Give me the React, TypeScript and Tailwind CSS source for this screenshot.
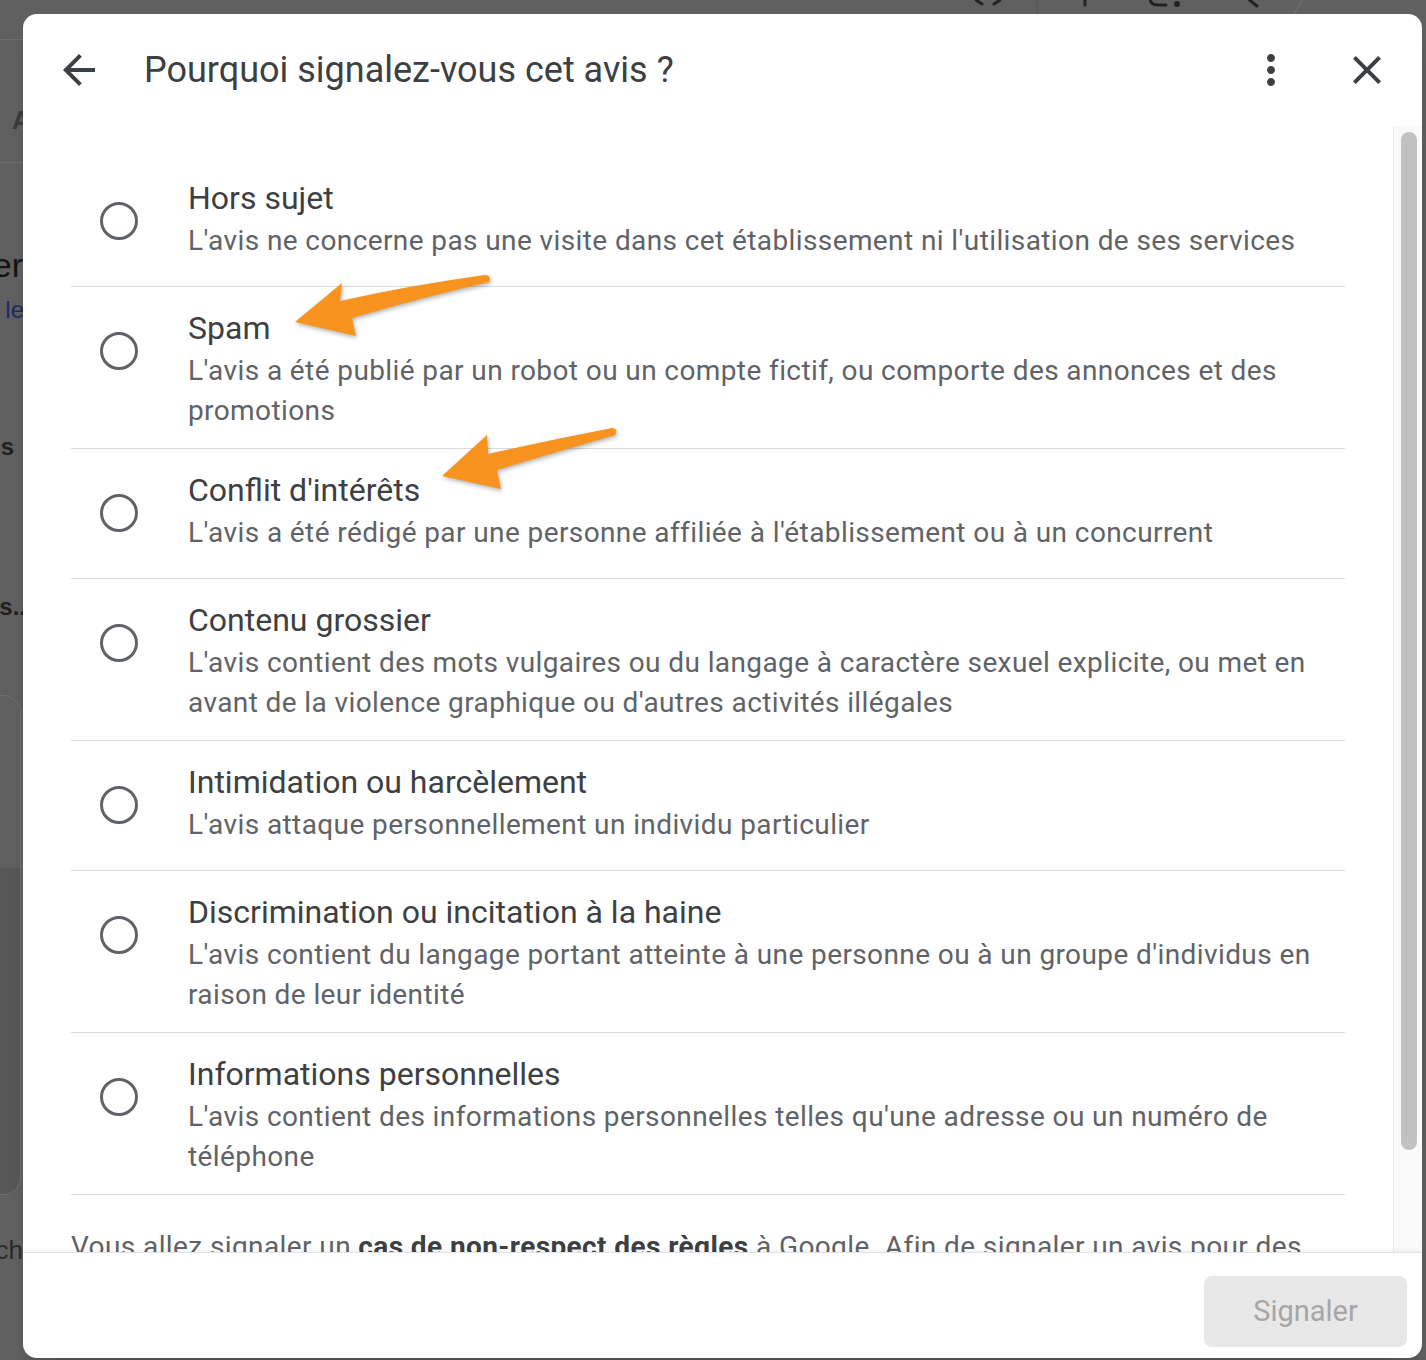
import { useState } from "react";

const reasons = [
  {
    title: "Hors sujet",
    desc: "L'avis ne concerne pas une visite dans cet établissement ni l'utilisation de ses services",
  },
  {
    title: "Spam",
    desc: "L'avis a été publié par un robot ou un compte fictif, ou comporte des annonces et des promotions",
  },
  {
    title: "Conflit d'intérêts",
    desc: "L'avis a été rédigé par une personne affiliée à l'établissement ou à un concurrent",
  },
  {
    title: "Contenu grossier",
    desc: "L'avis contient des mots vulgaires ou du langage à caractère sexuel explicite, ou met en avant de la violence graphique ou d'autres activités illégales",
  },
  {
    title: "Intimidation ou harcèlement",
    desc: "L'avis attaque personnellement un individu particulier",
  },
  {
    title: "Discrimination ou incitation à la haine",
    desc: "L'avis contient du langage portant atteinte à une personne ou à un groupe d'individus en raison de leur identité",
  },
  {
    title: "Informations personnelles",
    desc: "L'avis contient des informations personnelles telles qu'une adresse ou un numéro de téléphone",
  },
];

function Icon({ d }: { d: string }) {
  return (
    <svg viewBox="0 0 24 24" className="h-12 w-12 fill-[#3c4043]">
      <path d={d} />
    </svg>
  );
}

function Reason({
  title,
  desc,
  checked,
  onPick,
}: {
  title: string;
  desc: string;
  checked: boolean;
  onPick: () => void;
}) {
  return (
    <label
      onClick={onPick}
      className="flex min-h-[130px] cursor-pointer items-start border-b border-[#dadce0]"
    >
      <div className="w-[117px] shrink-0 pl-[29px] pt-[45px]">
        <div className="flex h-[38px] w-[38px] items-center justify-center rounded-full border-[3px] border-[#5f6368]">
          {checked && <div className="h-[18px] w-[18px] rounded-full bg-[#1a73e8]" />}
        </div>
      </div>
      <div className="flex-1 pb-[17px] pt-[21px]">
        <div className="text-[32px] leading-[40px] text-[#3c4043]">{title}</div>
        <div className="mt-[3px] text-[28px] leading-[40px] tracking-[0.4px] text-[#5f6368]">
          {desc}
        </div>
      </div>
    </label>
  );
}

// page behind the modal, mostly hidden
function Backdrop() {
  return (
    <div className="flex flex-col font-['Liberation_Sans',sans-serif]">
      <svg width="1426" height="14" viewBox="0 0 1426 14" className="block">
        <g stroke="#222" strokeWidth="3" fill="none" strokeLinecap="round">
          <path d="M976 0 L982 4 M1000 0 L994 4" />
          <path d="M1085 0 V5" />
          <path d="M1150 -2 Q1150 5 1158 5 H1166" />
          <path d="M1247 -2 L1257 6" />
        </g>
        <circle cx="1177" cy="4" r="3" fill="#222" />
        <path d="M1037 0 V14" stroke="#585858" strokeWidth="2" />
        <path d="M1302 0 Q1298 8 1294 14" stroke="#6e6e6e" strokeWidth="1.5" fill="none" />
      </svg>
      <div className="flex w-[60px] flex-col">
        <div className="h-[25px]" />
        <div className="h-px bg-[#6e6e6e]" />
        <div className="mt-[60px] h-[40px] pl-[12px] text-[26px] font-bold leading-[40px] text-[#3a3a3a]">
          A
        </div>
        <div className="mt-[22px] h-px bg-[#6e6e6e]" />
        <div className="mt-[82px] flex h-[40px] justify-end overflow-hidden whitespace-nowrap pr-[37px] text-[34px] leading-[40px] text-[#141414]">
          Trier
        </div>
        <div className="mt-[5px] flex h-[40px] justify-end overflow-hidden whitespace-nowrap pr-[36px] text-[24px] leading-[40px] text-[#1d2a6b]">
          Voir le
        </div>
        <div className="mt-[97px] flex h-[40px] justify-end overflow-hidden whitespace-nowrap pr-[46px] text-[24px] font-bold leading-[40px] text-[#202020]">
          Avis
        </div>
        <div className="mt-[120px] flex h-[40px] justify-end overflow-hidden whitespace-nowrap pr-[34px] text-[24px] font-bold leading-[40px] text-[#202020]">
          Photos..
        </div>
        <div className="ml-[-40px] mt-[68px] flex h-[500px] w-[61px] flex-col overflow-hidden rounded-[18px] border border-[#707070]">
          <div className="h-[172px]" />
          <div className="flex-1 bg-[#575757]" />
        </div>
        <div className="mt-[35px] flex h-[40px] justify-end overflow-hidden whitespace-nowrap pr-[37px] text-[26px] leading-[40px] text-[#2a2a2a]">
          Rich
        </div>
      </div>
    </div>
  );
}

export default function App() {
  const [picked, setPicked] = useState<number | null>(null);

  return (
    <div className="relative h-[1360px] w-full overflow-hidden bg-[#606060] font-['Roboto',sans-serif]">
      <Backdrop />

      <div className="absolute left-[23px] top-[14px] flex h-[1344px] w-[1399px] flex-col overflow-hidden rounded-[14px] bg-white shadow-xl">
        <header className="flex h-[112px] shrink-0 items-center pl-[32px] pr-[31px]">
          <Icon d="M20 11H7.83l5.59-5.59L12 4l-8 8 8 8 1.41-1.41L7.83 13H20v-2z" />
          <h1 className="ml-[41px] flex-1 text-[36px] text-[#3c4043]">
            Pourquoi signalez-vous cet avis ?
          </h1>
          <Icon d="M12 8c1.1 0 2-.9 2-2s-.9-2-2-2-2 .9-2 2 .9 2 2 2zm0 2c-1.1 0-2 .9-2 2s.9 2 2 2 2-.9 2-2-.9-2-2-2zm0 6c-1.1 0-2 .9-2 2s.9 2 2 2 2-.9 2-2-.9-2-2-2z" />
          <div className="ml-[48px]">
            <Icon d="M19 6.41L17.59 5 12 10.59 6.41 5 5 6.41 10.59 12 5 17.59 6.41 19 12 13.41 17.59 19 19 17.59 13.41 12z" />
          </div>
        </header>

        <div className="flex min-h-0 flex-1">
          <div className="flex-1 overflow-hidden px-[48px] pt-[31px]">
            {reasons.map((r, i) => (
              <Reason
                key={r.title}
                title={r.title}
                desc={r.desc}
                checked={picked === i}
                onPick={() => setPicked(i)}
              />
            ))}
            <p className="mt-[32px] text-[28px] leading-[40px] tracking-[0.4px] text-[#5f6368]">
              Vous allez signaler un{" "}
              <b className="font-bold text-[#3c4043]">cas de non-respect des règles</b> à Google.
              Afin de signaler un avis pour des raisons juridiques, utilisez plutôt ce formulaire.
            </p>
          </div>
          <div className="w-[29px] shrink-0 border-l border-[#ececec] bg-[#fafafa] pl-[7px] pt-[6px]">
            <div className="h-[1018px] w-[16px] rounded-full bg-[#c1c1c1]" />
          </div>
        </div>

        <footer className="flex h-[106px] shrink-0 items-start justify-end border-t border-[#e3e3e3] pr-[15px] pt-[23px] shadow-[0_-2px_4px_rgba(0,0,0,0.06)]">
          <button
            disabled
            className="h-[71px] w-[203px] rounded-[8px] bg-[#e8e8e8] text-[29px] text-[#a6a6a6]"
          >
            Signaler
          </button>
        </footer>
      </div>

      <svg
        className="pointer-events-none absolute left-0 top-0 drop-shadow-[1px_2px_2px_rgba(0,0,0,0.3)]"
        width="1426"
        height="1360"
        viewBox="0 0 1426 1360"
      >
        <path
          fill="#f7931e"
          d="M295 322 L342 283 L340 301 Q412 285 485 275 Q492 275 489 282 Q420 298 352 318 L356 336 Z"
        />
        <path
          fill="#f7931e"
          d="M442 476 L487 435 L488 454 Q550 440 612 428 Q619 429 615 435 Q556 452 497 470 L501 489 Z"
        />
      </svg>
    </div>
  );
}
